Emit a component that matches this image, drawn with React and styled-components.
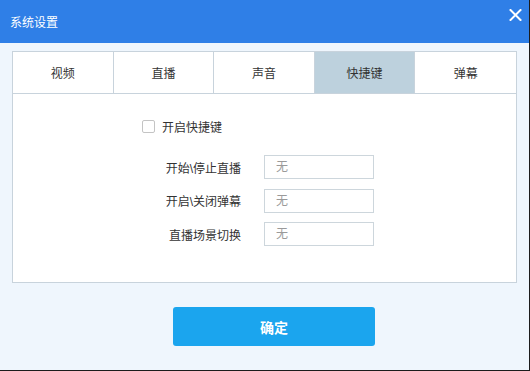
import React, { useState } from "react"
import styled, { createGlobalStyle } from "styled-components"

const GlobalStyle = createGlobalStyle`
    * { box-sizing: border-box; }
    body {
        margin: 0;
        font-family: "Liberation Sans", "Noto Sans CJK SC", sans-serif;
    }
`

const tabs = ['视频', '直播', '声音', '快捷键', '弹幕']

const hotkeys = ['开始\\停止直播', '开启\\关闭弹幕', '直播场景切换']

const App = () => {
    const [activeTab, setActiveTab] = useState(3)
    const [enabled, setEnabled] = useState(false)

    return (
        <>
            <GlobalStyle />
            <Window>
                <TitleBar>
                    <span>系统设置</span>
                    <CloseButton aria-label="close">
                        <svg width="13" height="12" viewBox="0 0 13 12">
                            <path d="M1.5 1 L11.5 11 M11.5 1 L1.5 11" stroke="#fff" strokeWidth="2" strokeLinecap="square" />
                        </svg>
                    </CloseButton>
                </TitleBar>

                <Content>
                    <Panel>
                        <TabBar>
                            {tabs.map((tab, index) => (
                                <Tab
                                    key={`tab-${index}`}
                                    $active={activeTab === index}
                                    onClick={() => setActiveTab(index)}
                                >
                                    {tab}
                                </Tab>
                            ))}
                        </TabBar>

                        <PanelBody>
                            <CheckRow onClick={() => setEnabled(!enabled)}>
                                <CheckBox $checked={enabled} />
                                <span>开启快捷键</span>
                            </CheckRow>

                            <Form>
                                {hotkeys.map((label, index) => (
                                    <FormRow key={`hotkey-${index}`}>
                                        <Label>{label}</Label>
                                        <KeyInput placeholder="无" readOnly />
                                    </FormRow>
                                ))}
                            </Form>
                        </PanelBody>
                    </Panel>

                    <Footer>
                        <ConfirmButton>确定</ConfirmButton>
                    </Footer>
                </Content>
            </Window>
        </>
    )
}

const Window = styled.div`
    width: 530px;
    height: 371px;
    display: flex;
    flex-direction: column;
    background-color: #eff6fd;
    border-right: 1px solid #1c1c1c;
    border-bottom: 1px solid #1c1c1c;
`

const TitleBar = styled.div`
    height: 43px;
    flex-shrink: 0;
    display: flex;
    align-items: center;
    justify-content: space-between;
    padding-left: 10px;
    background-color: #2f7fe7;
    color: white;
    font-size: 12px;
`

const CloseButton = styled.button`
    all: unset;
    display: flex;
    align-items: center;
    justify-content: center;
    width: 28px;
    height: 28px;
    margin-bottom: 14px;
    cursor: pointer;
`

const Content = styled.div`
    display: flex;
    flex-direction: column;
    padding: 8px 12px 0 12px;
`

const Panel = styled.div`
    height: 232px;
    display: flex;
    flex-direction: column;
    background-color: white;
    border: 1px solid #c8d3dc;
`

const TabBar = styled.div`
    display: grid;
    grid-template-columns: repeat(5, 1fr);
    height: 42px;
    border-bottom: 1px solid #c8d3dc;
`

const Tab = styled.div`
    display: flex;
    align-items: center;
    justify-content: center;
    font-size: 12px;
    color: #333;
    cursor: pointer;
    border-right: 1px solid #c8d3dc;
    background-color: ${props => props.$active ? '#bdd1dd' : 'white'};

    &:last-child {
        border-right: 0;
    }
`

const PanelBody = styled.div`
    display: flex;
    flex-direction: column;
    padding-top: 25px;
`

const CheckRow = styled.label`
    display: flex;
    align-items: center;
    gap: 7px;
    margin-left: 129px;
    font-size: 12px;
    color: #333;
    cursor: pointer;
    height: 14px;
`

const CheckBox = styled.span`
    width: 13px;
    height: 13px;
    border: 1px solid #c4c4c4;
    border-radius: 2px;
    background-color: ${props => props.$checked ? '#2f7fe7' : 'white'};
`

const Form = styled.div`
    display: flex;
    flex-direction: column;
    gap: 9.5px;
    margin-top: 22px;
`

const FormRow = styled.div`
    display: grid;
    grid-template-columns: 228px 110px;
    column-gap: 23px;
    align-items: center;
`

const Label = styled.div`
    text-align: right;
    font-size: 12px;
    color: #333;
`

const KeyInput = styled.input`
    height: 24px;
    border: 1px solid #cdd6dc;
    padding: 0 0 0 11px;
    outline: 0;
    font-family: inherit;
    font-size: 12px;
    color: #333;

    &::placeholder {
        color: #9a9a9a;
    }
`

const Footer = styled.div`
    display: flex;
    padding-top: 24px;
    padding-left: 161px;
`

const ConfirmButton = styled.button`
    all: unset;
    width: 202px;
    height: 39px;
    display: flex;
    align-items: center;
    justify-content: center;
    border-radius: 3px;
    background-color: #1ba5ee;
    color: white;
    font-size: 14px;
    font-weight: 700;
    cursor: pointer;
`

export default App
